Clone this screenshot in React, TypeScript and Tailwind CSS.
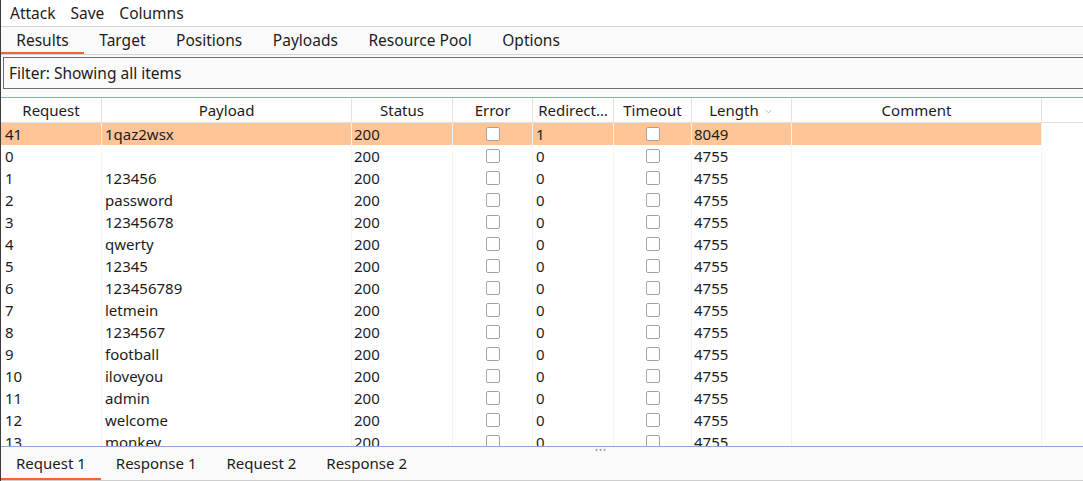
import { ChevronDown } from 'lucide-react'

type Row = {
  id: number
  payload: string
  status: number
  error: boolean
  redirects: number
  timeout: boolean
  length: number
  comment: string
}

const columns = [
  { name: 'Request', w: 'w-[101px]' },
  { name: 'Payload', w: 'w-[250px]' },
  { name: 'Status', w: 'w-[101px]' },
  { name: 'Error', w: 'w-[80px]' },
  { name: 'Redirect…', w: 'w-[81px]' },
  { name: 'Timeout', w: 'w-[78px]' },
  { name: 'Length', w: 'w-[100px]' },
  { name: 'Comment', w: 'w-[250px]' },
]

const payloads = [
  '',
  '123456',
  'password',
  '12345678',
  'qwerty',
  '12345',
  '123456789',
  'letmein',
  '1234567',
  'football',
  'iloveyou',
  'admin',
  'welcome',
  'monkey',
]

const rows: Row[] = [
  { id: 41, payload: '1qaz2wsx', status: 200, error: false, redirects: 1, timeout: false, length: 8049, comment: '' },
  ...payloads.map((p, i) => ({
    id: i,
    payload: p,
    status: 200,
    error: false,
    redirects: 0,
    timeout: false,
    length: 4755,
    comment: '',
  })),
]

function Checkbox() {
  return <span className="block w-[14px] h-[14px] rounded-[2px] border border-[#a4a4a4] bg-white" />
}

function TabBar({
  tabs,
  active,
  className,
  pad,
}: {
  tabs: string[]
  active: number
  className: string
  pad: string
}) {
  return (
    <div className={className}>
      {tabs.map((t, i) => (
        <div key={t} className={`relative h-full flex items-center ${pad}`}>
          {t}
          {i === active && <span className="absolute left-0 right-0 bottom-0 h-[2px] bg-[#f26531]" />}
        </div>
      ))}
    </div>
  )
}

export default function App() {
  const cell = 'h-full flex items-center shrink-0 border-r border-[#f3f3f3]'

  return (
    <div
      className="w-[1083px] h-[481px] flex flex-col overflow-hidden bg-white text-[15px] text-[#1c1c1c] border-l border-[#3c3c3c]"
      style={{ fontFamily: '"Noto Sans", "Open Sans", sans-serif' }}
    >
      {/* menu */}
      <div className="h-[27px] shrink-0 flex items-center gap-[15px] pl-[9px] pt-[2px] text-[15.5px] border-b border-[#d4d4d4]">
        <span>Attack</span>
        <span>Save</span>
        <span>Columns</span>
      </div>

      <TabBar
        tabs={['Results', 'Target', 'Positions', 'Payloads', 'Resource Pool', 'Options']}
        active={0}
        pad="px-[15.3px]"
        className="h-[28px] shrink-0 flex bg-[#fafafa] text-[15.5px] border-b border-[#d4d4d4]"
      />

      {/* filter */}
      <div className="h-[42px] shrink-0 bg-[#fafafa] pl-[2px] pt-[2px]">
        <div className="w-[1100px] h-[32px] flex items-center pl-[5px] pt-[1px] text-[15.5px] border border-[#6e6e6e] bg-[#fafafa]">
          Filter: Showing all items
        </div>
      </div>

      {/* results table */}
      <div className="relative flex-1 flex flex-col min-h-0 border-t border-[#8aaad4]">
        <div className="h-[25px] shrink-0 flex bg-white border-b border-[#e0e0e0]">
          {columns.map((c) => (
            <div
              key={c.name}
              className={`${c.w} h-full shrink-0 flex items-center justify-center gap-[4px] border-r border-[#e2e2e2]`}
            >
              {c.name}
              {c.name === 'Length' && <ChevronDown size={11} strokeWidth={1.5} className="text-[#9a9a9a] mt-[2px]" />}
            </div>
          ))}
        </div>

        <div className="flex-1 min-h-0 overflow-hidden">
          {rows.map((r, i) => (
            <div key={r.id} className={`h-[22px] w-[1041px] flex ${i === 0 ? 'bg-[#ffc597]' : ''}`}>
              <div className={`${cell} w-[101px] pl-[4px]`}>{r.id}</div>
              <div className={`${cell} w-[250px] pl-[3px]`}>{r.payload}</div>
              <div className={`${cell} w-[101px] pl-[2px]`}>{r.status}</div>
              <div className={`${cell} w-[80px] justify-center`}>
                <Checkbox />
              </div>
              <div className={`${cell} w-[81px] pl-[3px]`}>{r.redirects}</div>
              <div className={`${cell} w-[78px] justify-center`}>
                <Checkbox />
              </div>
              <div className={`${cell} w-[100px] pl-[2px]`}>{r.length}</div>
              <div className={`${cell} w-[250px]`}>{r.comment}</div>
            </div>
          ))}
        </div>
      </div>

      {/* request / response tabs */}
      <div className="relative h-[35px] shrink-0 border-t border-[#8aaad4] bg-[#fafafa]">
        <span className="absolute left-[594px] top-[-1px] text-[8px] leading-[8px] tracking-[1px] text-[#a0a0a0]">•••</span>
        <TabBar
          tabs={['Request 1', 'Response 1', 'Request 2', 'Response 2']}
          active={0}
          pad="px-[15px]"
          className="h-full flex border-b border-[#cfcfcf]"
        />
      </div>
    </div>
  )
}
